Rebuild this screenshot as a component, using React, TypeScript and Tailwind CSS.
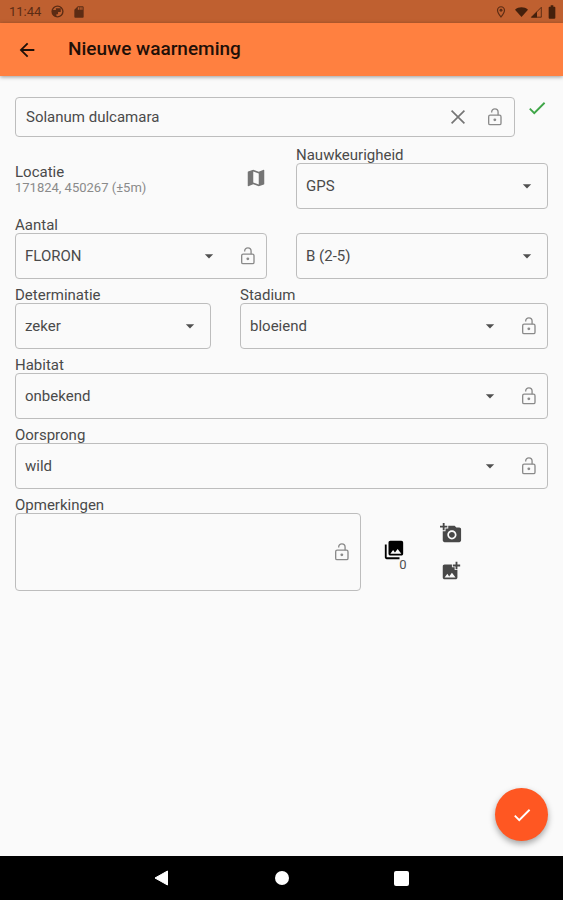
import { type ReactNode } from "react";
import {
  MdAddAPhoto,
  MdAddPhotoAlternate,
  MdArrowBack,
  MdArrowDropDown,
  MdBatteryFull,
  MdCheck,
  MdMap,
  MdOutlineLocationOn,
  MdPhotoLibrary,
  MdSdCard,
} from "react-icons/md";

function LockOpenIcon() {
  return (
    <svg width="20" height="20" viewBox="0 0 24 24" fill="none" stroke="currentColor" strokeWidth="1.6" aria-hidden="true">
      <rect x="4.4" y="9.8" width="14.8" height="11.4" rx="1.8" />
      <path d="M8 6.600V6C8 3.800 9.700 2.200 11.800 2.200S15.700 3.900 15.700 6v3.800" />
      <circle cx="11.8" cy="15.400" r="1.700" fill="currentColor" stroke="none" />
    </svg>
  );
}

function ClearIcon() {
  return (
    <svg width="22" height="22" viewBox="0 0 24 24" stroke="currentColor" strokeWidth="1.8" aria-hidden="true">
      <path d="M5 5l14 14M19 5L5 19" />
    </svg>
  );
}

function LockButton({ field }: { field: string }) {
  return (
    <button type="button" aria-label={`${field} vastzetten`} className="w-5 shrink-0 text-[#8a8a8a]">
      <LockOpenIcon />
    </button>
  );
}

function FieldLabel({ id, children }: { id: string; children: ReactNode }) {
  return (
    <label htmlFor={id} className="block h-4 text-[15px] leading-4 text-[#4a4a4a]">
      {children}
    </label>
  );
}

type SelectFieldProps = {
  id: string;
  label: string;
  value: string;
  hideLabel?: boolean;
  lock?: boolean;
};

function SelectField({ id, label, value, hideLabel, lock }: SelectFieldProps) {
  return (
    <div>
      {hideLabel ? <div className="h-4" /> : <FieldLabel id={id}>{label}</FieldLabel>}
      <div className="flex h-[46px] items-center rounded border border-[#bdbdbd]">
        <div className="relative h-full min-w-0 flex-1">
          <select
            id={id}
            aria-label={hideLabel ? label : undefined}
            defaultValue={value}
            className="h-full w-full appearance-none bg-transparent pr-8 pl-[9px] text-[15px] text-[#4a4a4a] outline-none"
          >
            <option>{value}</option>
          </select>
          <MdArrowDropDown
            size={20}
            className="pointer-events-none absolute inset-y-0 right-[10px] my-auto text-[#505050]"
          />
        </div>
        {lock && (
          <div className="flex pr-2 pl-[9px]">
            <LockButton field={label} />
          </div>
        )}
      </div>
    </div>
  );
}

function StatusBar() {
  return (
    <div className="flex h-[23px] items-center bg-[#bf6030] px-[9px] text-[#5c2c14]">
      <span className="text-[13px]">11:44</span>
      <svg width="13" height="13" viewBox="0 0 24 24" className="ml-[10px]" aria-hidden="true">
        <circle cx="12" cy="12" r="10" fill="none" stroke="currentColor" strokeWidth="2.5" />
        <path d="M2 9h7V6h9v7h-5v4h-3v5C5 21 2 17 2 12z" fill="currentColor" />
      </svg>
      <MdSdCard size={14} className="ml-2" />
      <div className="ml-auto -mr-[6px] flex items-center text-[#44200c]">
        <MdOutlineLocationOn size={14} className="text-[#5c2c14]" />
        <svg width="13" height="12" viewBox="0 0 14 12" className="ml-[7px]" aria-hidden="true">
          <path d="M0 3.500C4 0 10 0 14 3.500L7 11.500z" fill="currentColor" />
        </svg>
        <svg width="12" height="12" viewBox="0 0 12 12" className="ml-[2px]" aria-hidden="true">
          <path d="M1.500 11.200L11.300 1.300v9.900z" fill="none" stroke="currentColor" strokeWidth="0.8" />
          <path d="M1 11.500L7 5.500v6z" fill="currentColor" />
        </svg>
        <MdBatteryFull size={16} className="ml-[2px]" />
      </div>
    </div>
  );
}

function AppBar() {
  return (
    <header className="flex h-[53px] items-center bg-[#ff8040] px-4 text-[#1f1008] shadow-[0_1px_4px_rgba(0,0,0,0.4)]">
      <button type="button" aria-label="Terug">
        <MdArrowBack size={22} />
      </button>
      <h1 className="ml-[30px] text-[19px] font-medium">Nieuwe waarneming</h1>
    </header>
  );
}

function SystemNav() {
  return (
    <nav className="flex h-11 items-center justify-center gap-[105px] bg-black text-white">
      <button type="button" aria-label="Vorige">
        <svg width="16" height="16" viewBox="0 0 16 16" aria-hidden="true">
          <path d="M1 8L13.500 1v14z" fill="currentColor" stroke="currentColor" strokeLinejoin="round" />
        </svg>
      </button>
      <button type="button" aria-label="Startscherm" className="size-[14px] rounded-full bg-white" />
      <button type="button" aria-label="Overzicht" className="size-[15px] rounded-[2px] bg-white" />
    </nav>
  );
}

export default function App() {
  return (
    <div className="flex min-h-screen flex-col bg-[#fafafa] font-['Roboto',sans-serif]">
      <StatusBar />
      <AppBar />
      <main className="flex flex-1 flex-col px-[15px] pt-[21px] pb-[15px]">
        <form className="flex flex-col gap-2">
          <div className="mb-0.5 flex items-start">
            <div className="flex h-10 flex-1 items-center rounded-sm border border-[#bdbdbd] pr-[9px]">
              <input
                type="text"
                aria-label="Soort"
                defaultValue="Solanum dulcamara"
                className="min-w-0 flex-1 bg-transparent pl-[10px] text-[15px] text-[#4a4a4a] outline-none"
              />
              <button type="button" aria-label="Wissen" className="mr-4 text-[#757575]">
                <ClearIcon />
              </button>
              <LockButton field="Soort" />
            </div>
            <MdCheck size={22} className="ml-[11px] text-[#3fa648]" />
          </div>

          <div className="grid grid-cols-2 gap-[29px]">
            <div className="flex items-center justify-between">
              <div className="pt-1">
                <p className="text-[15px] leading-4 text-[#4a4a4a]">Locatie</p>
                <p className="text-[13px] leading-4 text-[#8a8a8a]">171824, 450267 (±5m)</p>
              </div>
              <button type="button" aria-label="Kaart" className="text-[#757575]">
                <MdMap size={22} />
              </button>
            </div>
            <SelectField id="nauwkeurigheid" label="Nauwkeurigheid" value="GPS" />
          </div>

          <div className="grid grid-cols-2 gap-[29px]">
            <SelectField id="aantal" label="Aantal" value="FLORON" lock />
            <SelectField id="klasse" label="Klasse" value="B (2-5)" hideLabel />
          </div>

          <div className="grid grid-cols-[7fr_11fr] gap-[29px]">
            <SelectField id="determinatie" label="Determinatie" value="zeker" />
            <SelectField id="stadium" label="Stadium" value="bloeiend" lock />
          </div>

          <SelectField id="habitat" label="Habitat" value="onbekend" lock />
          <SelectField id="oorsprong" label="Oorsprong" value="wild" lock />

          <div className="grid grid-cols-[21fr_10fr] gap-[22px]">
            <div>
              <FieldLabel id="opmerkingen">Opmerkingen</FieldLabel>
              <div className="flex h-[78px] items-center rounded border border-[#bdbdbd] pr-2">
                <textarea
                  id="opmerkingen"
                  className="h-full min-w-0 flex-1 resize-none bg-transparent p-[9px] text-[15px] text-[#4a4a4a] outline-none"
                />
                <LockButton field="Opmerkingen" />
              </div>
            </div>
            <div className="flex items-center gap-[35px] pt-4">
              <button type="button" aria-label="Foto's bekijken" className="relative mb-1 text-black">
                <MdPhotoLibrary size={22} />
                <span className="absolute top-4 left-4 text-[13px] text-[#505050]">0</span>
              </button>
              <div className="flex flex-col gap-4 text-[#484848]">
                <button type="button" aria-label="Foto maken">
                  <MdAddAPhoto size={22} />
                </button>
                <button type="button" aria-label="Foto toevoegen">
                  <MdAddPhotoAlternate size={22} />
                </button>
              </div>
            </div>
          </div>
        </form>

        <button
          type="button"
          aria-label="Opslaan"
          className="mt-auto ml-auto flex size-[53px] items-center justify-center rounded-full bg-[#ff5722] text-white shadow-[0_3px_6px_rgba(0,0,0,0.35)]"
        >
          <MdCheck size={22} />
        </button>
      </main>
      <SystemNav />
    </div>
  );
}
